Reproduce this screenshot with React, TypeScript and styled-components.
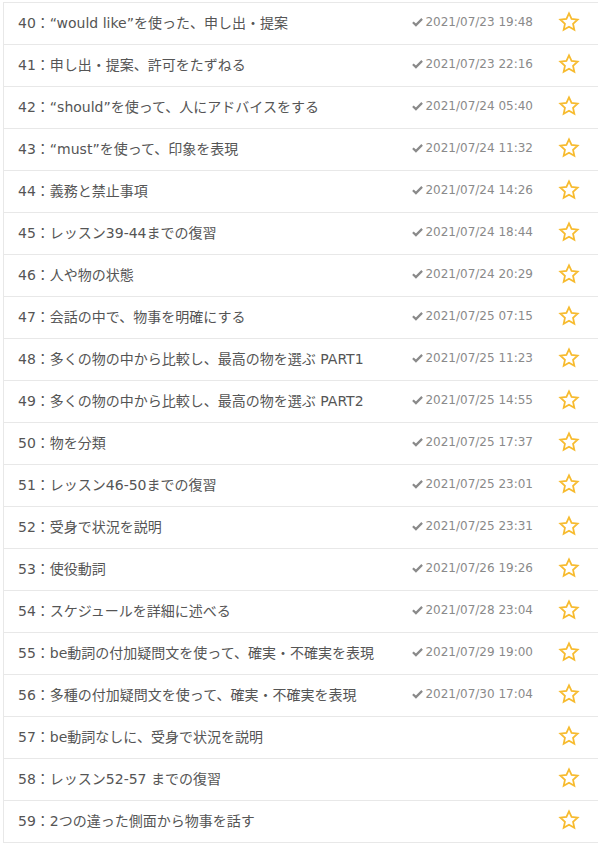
import React from 'react';
import styled, { createGlobalStyle } from 'styled-components';

type Lesson = {
  no: number;
  title: string;
  done?: string;
};

const lessons: Lesson[] = [
  { no: 40, title: '“would like”を使った、申し出・提案', done: '2021/07/23 19:48' },
  { no: 41, title: '申し出・提案、許可をたずねる', done: '2021/07/23 22:16' },
  { no: 42, title: '“should”を使って、人にアドバイスをする', done: '2021/07/24 05:40' },
  { no: 43, title: '“must”を使って、印象を表現', done: '2021/07/24 11:32' },
  { no: 44, title: '義務と禁止事項', done: '2021/07/24 14:26' },
  { no: 45, title: 'レッスン39-44までの復習', done: '2021/07/24 18:44' },
  { no: 46, title: '人や物の状態', done: '2021/07/24 20:29' },
  { no: 47, title: '会話の中で、物事を明確にする', done: '2021/07/25 07:15' },
  { no: 48, title: '多くの物の中から比較し、最高の物を選ぶ PART1', done: '2021/07/25 11:23' },
  { no: 49, title: '多くの物の中から比較し、最高の物を選ぶ PART2', done: '2021/07/25 14:55' },
  { no: 50, title: '物を分類', done: '2021/07/25 17:37' },
  { no: 51, title: 'レッスン46-50までの復習', done: '2021/07/25 23:01' },
  { no: 52, title: '受身で状況を説明', done: '2021/07/25 23:31' },
  { no: 53, title: '使役動詞', done: '2021/07/26 19:26' },
  { no: 54, title: 'スケジュールを詳細に述べる', done: '2021/07/28 23:04' },
  { no: 55, title: 'be動詞の付加疑問文を使って、確実・不確実を表現', done: '2021/07/29 19:00' },
  { no: 56, title: '多種の付加疑問文を使って、確実・不確実を表現', done: '2021/07/30 17:04' },
  { no: 57, title: 'be動詞なしに、受身で状況を説明' },
  { no: 58, title: 'レッスン52-57 までの復習' },
  { no: 59, title: '2つの違った側面から物事を話す' },
];

const GlobalStyle = createGlobalStyle`
  body {
    margin: 0;
    background: #fff;
    font-family: "DejaVu Sans", "Noto Sans CJK JP", sans-serif;
  }
`;

const List = styled.ul`
  list-style: none;
  margin: 2px 0 0 3px;
  padding: 0;
  width: 594px;
  border-left: 1px solid #e8e8e8;
  border-top: 1px solid #e8e8e8;
`;

const Row = styled.li`
  display: flex;
  align-items: center;
  box-sizing: border-box;
  height: 42px;
  border-bottom: 1px solid #e8e8e8;
  padding: 0 0 3px 14px;
`;

const Title = styled.span`
  flex: 1;
  font-size: 14px;
  color: #555;
  white-space: nowrap;
`;

const Done = styled.span`
  display: flex;
  align-items: center;
  gap: 2px;
  font-size: 12px;
  color: #8a8a8a;
  margin-right: 25px;
`;

const StarBox = styled.span`
  display: flex;
  width: 22px;
  justify-content: center;
  margin-right: 18px;
`;

function Check() {
  return (
    <svg width="11" height="10" viewBox="0 0 12 10">
      <path d="M1 5.2 L4.3 8.4 L11 1.6" fill="none" stroke="#8a8a8a" strokeWidth="2.4" />
    </svg>
  );
}

function Star() {
  return (
    <svg width="22" height="22" viewBox="0 0 24 24">
      <path
        d="M12 2.6 L14.8 8.7 L21.4 9.4 L16.4 13.9 L17.8 20.5 L12 17.1 L6.2 20.5 L7.6 13.9 L2.6 9.4 L9.2 8.7 Z"
        fill="none"
        stroke="#f7bb2f"
        strokeWidth="1.9"
        strokeLinejoin="miter"
      />
    </svg>
  );
}

export default function App() {
  return (
    <>
      <GlobalStyle />
      <List>
        {lessons.map(l => (
          <Row key={l.no}>
            <Title>
              {l.no}：{l.title}
            </Title>
            {l.done && (
              <Done>
                <Check />
                {l.done}
              </Done>
            )}
            <StarBox>
              <Star />
            </StarBox>
          </Row>
        ))}
      </List>
    </>
  );
}
